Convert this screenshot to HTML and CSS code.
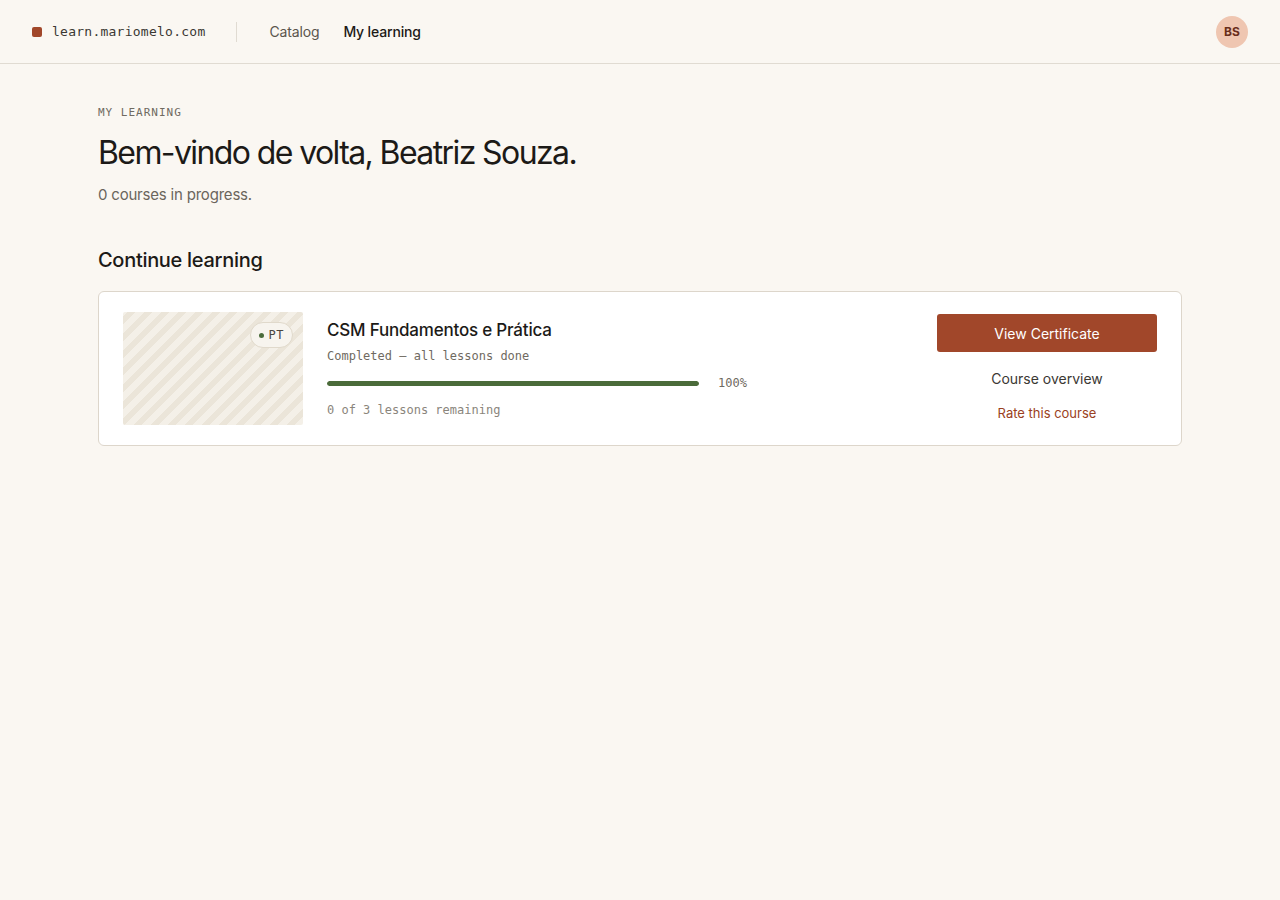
FILE: index.html
```html
<!DOCTYPE html>
<html lang="en">
<head>
    <meta charset="UTF-8">
    <meta name="viewport" content="width=device-width, initial-scale=1.0">
    <title>My learning · learn.mariomelo.com</title>
    <link rel="stylesheet" href="styles.css">
</head>
<body>
    <header class="topbar">
        <a class="brand" href="#">
            <span class="brand-mark"></span>
            <span class="brand-name">learn.mariomelo.com</span>
        </a>
        <span class="topbar-divider"></span>
        <nav class="nav">
            <a href="#">Catalog</a>
            <a href="#" class="active">My learning</a>
        </nav>
        <div class="avatar">BS</div>
    </header>

    <main class="page">
        <div class="eyebrow">MY LEARNING</div>
        <h1>Bem-vindo de volta, Beatriz Souza.</h1>
        <p class="lead">0 courses in progress.</p>

        <h2>Continue learning</h2>

        <div class="course-card">
            <div class="thumb">
                <span class="lang-pill"><span class="dot"></span>PT</span>
            </div>
            <div class="course-info">
                <h3>CSM Fundamentos e Prática</h3>
                <div class="course-status">Completed — all lessons done</div>
                <div class="progress-row">
                    <div class="progress"><div class="progress-fill" style="width: 100%"></div></div>
                    <span class="progress-pct">100%</span>
                </div>
                <div class="course-remaining">0 of 3 lessons remaining</div>
            </div>
            <div class="course-actions">
                <a href="#" class="btn-primary">View Certificate</a>
                <a href="#" class="link-plain">Course overview</a>
                <a href="#" class="link-accent">Rate this course</a>
            </div>
        </div>
    </main>
</body>
</html>
```

FILE: styles.css
```css
body {
    margin: 0;
    background: #faf7f2;
    color: #1c1a17;
    font-family: Inter, "Noto Sans", sans-serif;
}
a {
    text-decoration: none;
    color: inherit;
}

/* top bar */
.topbar {
    display: flex;
    align-items: center;
    height: 63px;
    padding: 0 32px;
    border-bottom: 1px solid #e0dbd2;
}
.brand {
    display: flex;
    align-items: center;
    gap: 10px;
}
.brand-mark {
    width: 10px;
    height: 10px;
    border-radius: 2px;
    background: #a1472a;
}
.brand-name {
    font-family: "DejaVu Sans Mono", monospace;
    font-size: 13px;
    color: #3b3833;
    letter-spacing: 0.25px;
}
.topbar-divider {
    width: 1px;
    height: 20px;
    background: #e0dbd2;
    margin: 0 32px 0 31px;
}
.nav {
    display: flex;
    gap: 24px;
    font-size: 14px;
    letter-spacing: -0.15px;
}
.nav a {
    color: #5a554d;
}
.nav a.active {
    color: #1c1a17;
    font-weight: 500;
}
.avatar {
    margin-left: auto;
    width: 32px;
    height: 32px;
    border-radius: 50%;
    background: #efc6b1;
    color: #6a2e1b;
    font-size: 12px;
    font-weight: 700;
    display: flex;
    align-items: center;
    justify-content: center;
}

/* main */
.page {
    max-width: 1084px;
    margin: 0 auto;
    padding: 40px 0;
}
.eyebrow {
    font-family: "DejaVu Sans Mono", monospace;
    font-size: 11px;
    letter-spacing: 1px;
    color: #6f6a61;
    margin-top: 2px;
}
h1 {
    font-size: 32px;
    font-weight: 400;
    letter-spacing: -1.6px;
    margin: 14px 0 0;
    line-height: 40px;
}
.lead {
    font-size: 15px;
    letter-spacing: -0.2px;
    color: #6a655c;
    margin: 12px 0 0;
}
h2 {
    font-size: 20px;
    font-weight: 500;
    letter-spacing: -0.3px;
    margin: 44px 0 19px;
}

/* course card */
.course-card {
    display: flex;
    align-items: flex-start;
    gap: 24px;
    padding: 20px 24px;
    background: #fff;
    border: 1px solid #ddd6cb;
    border-radius: 6px;
}
.thumb {
    position: relative;
    width: 180px;
    height: 113px;
    flex-shrink: 0;
    border-radius: 2px;
    background: repeating-linear-gradient(-45deg, #f4f0e8 0 6px, #ebe5d9 6px 12px);
}
.lang-pill {
    position: absolute;
    top: 10px;
    right: 10px;
    display: flex;
    align-items: center;
    gap: 5px;
    padding: 5px 8px;
    border-radius: 13px;
    background: #f7f4ee;
    border: 1px solid #e0d9cb;
    font-family: "DejaVu Sans Mono", monospace;
    font-size: 12px;
    letter-spacing: 0.5px;
    color: #4a463f;
}
.lang-pill .dot {
    width: 5px;
    height: 5px;
    border-radius: 50%;
    background: #4a6b3a;
}
.course-info {
    flex: 1;
    padding-top: 8px;
}
h3 {
    font-size: 17px;
    font-weight: 500;
    letter-spacing: -0.2px;
    margin: 0;
}
.course-status {
    font-family: "DejaVu Sans Mono", monospace;
    font-size: 12px;
    color: #6f6a61;
    margin-top: 9px;
}
.progress-row {
    display: flex;
    align-items: center;
    gap: 19px;
    margin-top: 13px;
    width: 420px;
}
.progress {
    width: 372px;
    height: 5px;
    border-radius: 3px;
    background: #ece7de;
    overflow: hidden;
}
.progress-fill {
    height: 100%;
    background: #4a6b3a;
    border-radius: 3px;
}
.progress-pct {
    font-family: "DejaVu Sans Mono", monospace;
    font-size: 12px;
    color: #6f6a61;
}
.course-remaining {
    font-family: "DejaVu Sans Mono", monospace;
    font-size: 12px;
    color: #8a857c;
    margin-top: 13px;
}
.course-actions {
    width: 220px;
    display: flex;
    flex-direction: column;
    align-items: center;
    padding-top: 2px;
}
.btn-primary {
    width: 100%;
    height: 38px;
    display: flex;
    align-items: center;
    justify-content: center;
    background: #a1472a;
    color: #fff;
    border-radius: 3px;
    font-size: 14px;
    font-weight: 400;
}
.link-plain {
    font-size: 14px;
    color: #3b3833;
    margin-top: 18px;
}
.link-accent {
    font-size: 13px;
    color: #9a3f22;
    margin-top: 18px;
}
```
